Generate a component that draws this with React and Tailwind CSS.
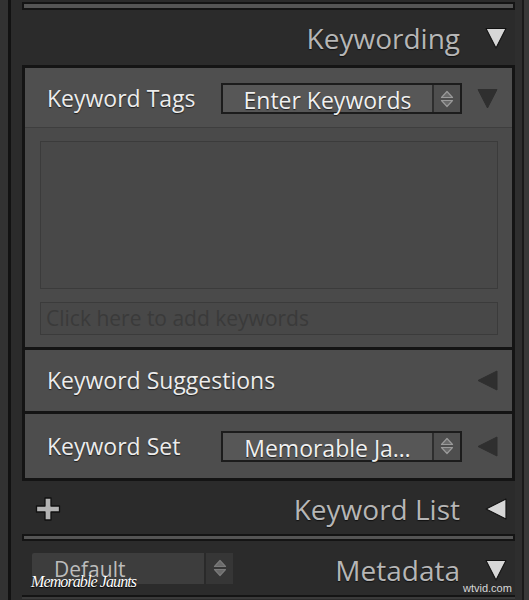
function TriDown({ fill = "#d6d6d6", stroke = "#111", size = 21, className = "" }) {
  return (
    <svg className={"shrink-0 " + className} width={size} height={size} viewBox="0 0 21 21">
      <polygon points="1,1.5 20,1.5 10.5,20" fill={fill} stroke={stroke} strokeWidth="1" strokeLinejoin="round" />
    </svg>
  );
}

function TriLeft({ fill = "#d6d6d6", stroke = "#111", size = 21, className = "" }) {
  return (
    <svg className={"shrink-0 " + className} width={size} height={size} viewBox="0 0 21 21">
      <polygon points="20,1 20,20 1,10.5" fill={fill} stroke={stroke} strokeWidth="1" strokeLinejoin="round" />
    </svg>
  );
}

function Spin({ color = "#9a9a9a" }) {
  return (
    <svg className="shrink-0" width="14" height="18" viewBox="0 0 14 18">
      <polygon points="7,1.5 12.5,7.5 1.5,7.5" fill="#6a6a6a" stroke={color} strokeWidth="1.2" strokeLinejoin="round" />
      <polygon points="1.5,10.5 12.5,10.5 7,16.5" fill="#6a6a6a" stroke={color} strokeWidth="1.2" strokeLinejoin="round" />
    </svg>
  );
}

function Popup({ children }) {
  return (
    <div className="flex h-[31px] w-[241px] shrink-0 border-2 border-[#1c1c1c] bg-[#575757]">
      <div className="flex flex-1 items-center justify-center pt-[4px] text-[23px] leading-none text-[#f0f0f0] [text-shadow:0_1px_1px_#202020]">
        {children}
      </div>
      <div className="flex w-[28px] items-center justify-center border-l-2 border-[#2e2e2e] bg-[#4e4e4e]">
        <Spin />
      </div>
    </div>
  );
}

function Header({ title, left, tri }) {
  return (
    <div className="flex h-full items-center">
      <div className="flex-1">{left}</div>
      <span className="text-[28px] leading-none text-[#b6b6b6] [text-shadow:0_1px_1px_#111]">{title}</span>
      <div className="ml-[25px] mr-[8px] flex w-[22px] shrink-0 items-center">
        {tri === "down" ? <TriDown size={22} /> : <TriLeft size={22} />}
      </div>
    </div>
  );
}

export default function App() {
  return (
    <div className="relative flex h-[600px] w-[529px] overflow-hidden bg-[#2b2b2b] font-['Open_Sans','Liberation_Sans',sans-serif]">
      <div className="w-[8px] bg-[#323232]" />
      <div className="w-[3px] bg-[#121212]" />

      <div className="ml-[11px] flex w-[493px] flex-col">
        {/* top separator */}
        <div className="mt-[2px] h-[8px] border-2 border-[#141414] bg-[#555555]" />

        <div className="h-[55px] pt-[1px]">
          <Header title="Keywording" tri="down" />
        </div>

        {/* Keywording panel */}
        <div className="border-[3px] border-[#141414] bg-[#4a4a4a]">
          <div className="flex h-[60px] items-center border-b border-[#3e3e3e] bg-[#4f4f4f] pl-[22px] pt-[2px]">
            <span className="w-[174px] shrink-0 text-[23px] leading-none text-[#ececec] [text-shadow:0_1px_1px_#1e1e1e]">Keyword Tags</span>
            <Popup>Enter Keywords</Popup>
            <TriDown fill="#2f2f2f" stroke="#2f2f2f" className="ml-[15px]" />
          </div>
          <div className="pb-[12px] pl-[15px] pr-[14px] pt-[13px]">
            <div className="h-[148px] border border-[#3b3b3b] bg-[#484848]" />
            <div className="mt-[13px] flex h-[33px] items-center border border-[#3b3b3b] bg-[#484848] pl-[5px] text-[21px] leading-none text-[#3a3a3a]">
              Click here to add keywords
            </div>
          </div>

          <div className="flex h-[64px] items-center border-t-[3px] border-[#141414] bg-[#4d4d4d] pl-[22px] pr-[14px]">
            <span className="flex-1 text-[23px] leading-none text-[#ececec] [text-shadow:0_1px_1px_#1e1e1e]">Keyword Suggestions</span>
            <TriLeft fill="#2f2f2f" stroke="#2f2f2f" />
          </div>

          <div className="flex h-[67px] items-center border-t-[3px] border-[#141414] bg-[#4d4d4d] pl-[22px]">
            <span className="w-[174px] shrink-0 text-[23px] leading-none text-[#ececec] [text-shadow:0_1px_1px_#1e1e1e]">Keyword Set</span>
            <Popup>Memorable Ja…</Popup>
            <TriLeft fill="#2f2f2f" stroke="#2f2f2f" className="ml-[15px]" />
          </div>
        </div>

        <div className="h-[53px] pt-[2px]">
          <Header
            title="Keyword List"
            tri="left"
            left={
              <svg className="ml-[12px] shrink-0" width="28" height="26" viewBox="0 0 28 26">
                <path d="M11 2h6v8h8.5v6H17v8h-6v-8H2.5v-6H11z" fill="#b4b4b4" stroke="#111" strokeWidth="1.3" strokeLinejoin="round" />
              </svg>
            }
          />
        </div>

        <div className="h-[7px] border-2 border-[#141414] bg-[#555555]" />

        <div className="h-[54px] pt-[4px]">
          <Header
            title="Metadata"
            tri="down"
            left={
              <div className="ml-[10px] -mt-[4px] flex h-[31px] w-[201px] rounded-[2px] bg-[#3d3d3d]">
                <div className="flex flex-1 items-center pl-[22px] pt-[2px] text-[21px] leading-none text-[#bcbcbc]">Default</div>
                <div className="flex w-[29px] items-center justify-center border-l-2 border-[#2a2a2a] bg-[#363636]">
                  <Spin color="#7a7a7a" />
                </div>
              </div>
            }
          />
        </div>

        <div className="h-[4px] border-t-2 border-[#141414] bg-[#3a3a3a]" />
      </div>

      <div className="w-[7px] bg-[#2e2e2e]" />
      <div className="w-[2px] bg-[#1a1a1a]" />
      <div className="flex-1 bg-[#383838]" />

      <span className="absolute left-[31px] top-[574px] font-['Liberation_Serif',serif] text-[16px] italic leading-none tracking-[-0.9px] text-white [text-shadow:0_1px_1px_#000]">
        Memorable Jaunts
      </span>
      <span className="absolute left-[463px] top-[583px] font-['Liberation_Sans',sans-serif] text-[11px] leading-none text-[#d8d8d8]">
        wtvid.com
      </span>
    </div>
  );
}
